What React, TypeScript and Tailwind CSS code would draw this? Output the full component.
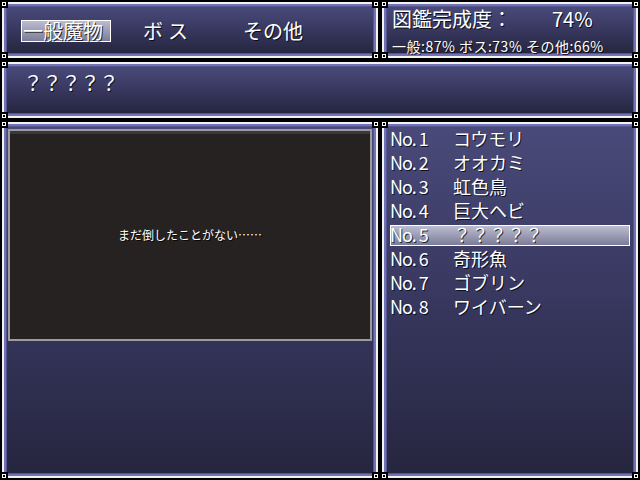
import React from "react";

const FONT = { fontFamily: '"Noto Sans CJK JP", "Noto Sans", sans-serif' };

function Corner({ pos }: { pos: "tl" | "tr" | "bl" | "br" }) {
  const place =
    pos === "tl"
      ? "-left-[2px] -top-[2px] justify-start items-start"
      : pos === "tr"
      ? "-right-[2px] -top-[2px] justify-end items-start"
      : pos === "bl"
      ? "-left-[2px] -bottom-[2px] justify-start items-end"
      : "-right-[2px] -bottom-[2px] justify-end items-end";
  return (
    <div className={`absolute w-[6px] h-[6px] bg-black flex ${place}`}>
      <div className="w-[4px] h-[4px] bg-white flex items-center justify-center">
        <div className="w-[2px] h-[2px] bg-black" />
      </div>
    </div>
  );
}

function Win({
  className = "",
  innerClass = "",
  children,
}: {
  className?: string;
  innerClass?: string;
  children?: React.ReactNode;
}) {
  return (
    <div className={`p-[2px] ${className}`}>
      <div className="relative h-full border-2 border-[#f2f2f2]">
        <div className="h-full border-2 border-[#7272b6]">
          <div
            className={`h-full border border-[#55558e] bg-[linear-gradient(to_bottom,#4a4a7a,#393962_45%,#262640)] ${innerClass}`}
          >
            {children}
          </div>
        </div>
        <Corner pos="tl" />
        <Corner pos="tr" />
        <Corner pos="bl" />
        <Corner pos="br" />
      </div>
    </div>
  );
}

const shadow = "[text-shadow:1px_1px_0_rgba(0,0,0,0.75)] text-white";

const monsters = [
  "コウモリ",
  "オオカミ",
  "虹色鳥",
  "巨大ヘビ",
  "？？？？？",
  "奇形魚",
  "ゴブリン",
  "ワイバーン",
];

export default function App() {
  return (
    <div
      className="w-[640px] h-[480px] bg-black grid grid-cols-[380px_260px] grid-rows-[60px_60px_360px] overflow-hidden"
      style={FONT}
    >
      {/* Top-left: categories */}
      <Win innerClass="flex items-start pt-[13px] pl-[14px]">
        <div className="w-[90px] h-[22px] border border-white bg-[linear-gradient(to_bottom,#bcbcd0,#7c7c98)] flex items-center pl-[1px]">
          <span className={`text-[20px] leading-[22px] ${shadow}`}>一般魔物</span>
        </div>
        <div className="ml-[32px] w-[100px] h-[22px] flex items-center">
          <span className={`text-[20px] leading-[22px] tracking-[5px] ${shadow}`}>ボス</span>
        </div>
        <div className="h-[22px] flex items-center">
          <span className={`text-[20px] leading-[22px] ${shadow}`}>その他</span>
        </div>
      </Win>

      {/* Top-right: completion */}
      <Win innerClass="flex flex-col pl-[5px]">
        <div className="flex h-[24px] items-center">
          <span className={`w-[160px] text-[20px] leading-[24px] ${shadow}`}>図鑑完成度：</span>
          <span className={`text-[20px] leading-[24px] ${shadow}`}>74%</span>
        </div>
        <div className={`mt-[7px] text-[14px] leading-[16px] whitespace-nowrap tracking-[0.5px] ${shadow}`}>
          一般:87% ボス:73% その他:66%
        </div>
      </Win>

      {/* Second row: name */}
      <Win className="col-span-2" innerClass="pl-[16px] pt-[4px]">
        <span className={`text-[20px] leading-[24px] tracking-[-1px] ${shadow}`}>？？？？？</span>
      </Win>

      {/* Bottom-left: picture */}
      <Win innerClass="pt-[2px] px-[1px]">
        <div className="h-[212px] border-2 border-[#9c9c9c] bg-[#262222] shadow-[inset_0_3px_0_#3a3838] flex items-center justify-center">
          <span className={`text-[12px] leading-[14px] ${shadow}`}>まだ倒したことがない……</span>
        </div>
      </Win>

      {/* Bottom-right: list */}
      <Win innerClass="pt-[0px] pl-[2px] pr-[2px] flex flex-col">
        {monsters.map((m, i) => (
          <div key={i} className="relative h-[24px] flex items-center">
            {i === 4 && (
              <div className="absolute left-[1px] right-[1px] top-[2px] bottom-[1px] border border-white bg-[linear-gradient(to_bottom,#bcbcd0,#7c7c98)]" />
            )}
            <span
              className={`relative -top-[1px] w-[64px] pl-[1px] text-[18px] leading-[24px] tracking-[-1px] whitespace-pre ${shadow}`}
            >
              {`No. ${i + 1}`}
            </span>
            <span className={`relative -top-[1px] text-[18px] leading-[24px] ${shadow}`}>{m}</span>
          </div>
        ))}
      </Win>
    </div>
  );
}
